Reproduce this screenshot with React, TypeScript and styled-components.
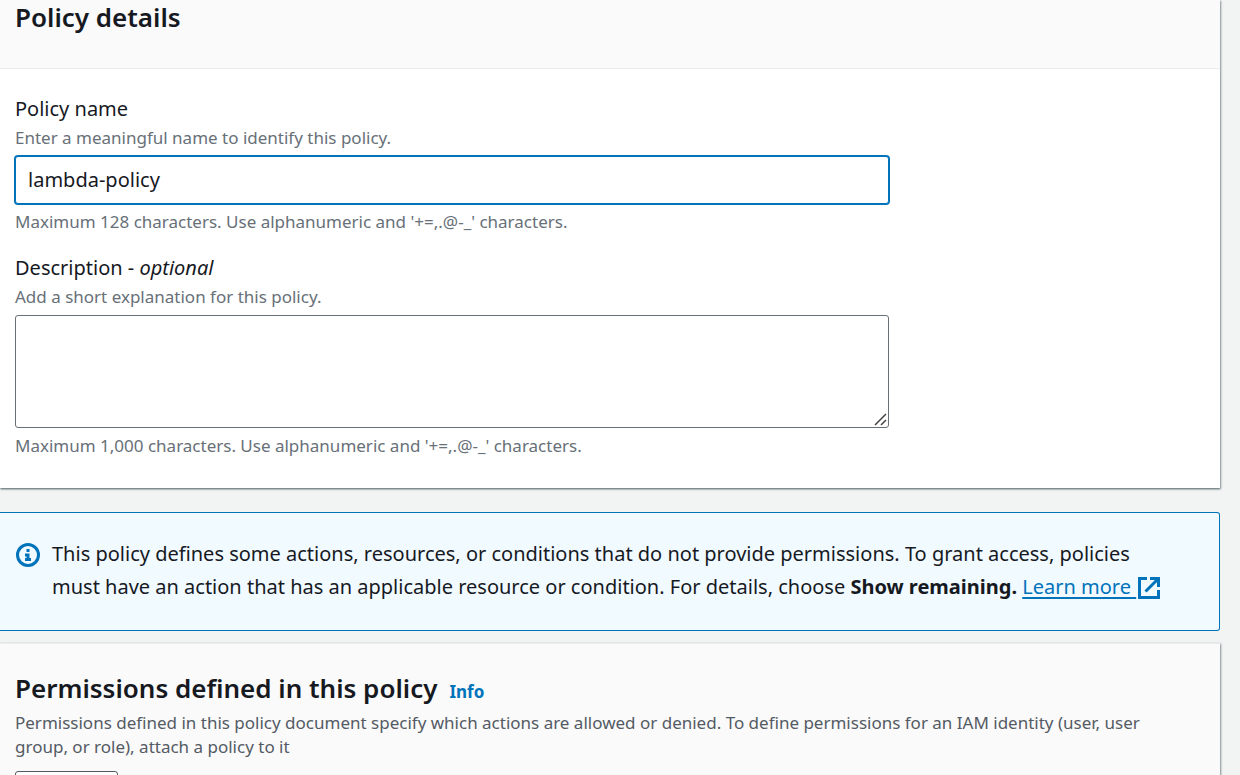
import React from "react";
import styled, { createGlobalStyle } from "styled-components";

const GlobalStyle = createGlobalStyle`
  *, *::before, *::after { box-sizing: border-box; }
  body {
    margin: 0;
    background: #f2f3f3;
    color: #16191f;
    font-family: "Noto Sans", "Open Sans", sans-serif;
    font-size: 20px;
    line-height: 33px;
  }
`;

const Page = styled.main`
  display: flex;
  flex-direction: column;
  height: 100vh;
  padding-right: 20px;
  overflow: hidden;
`;

const Panel = styled.section`
  flex: none;
  background: #ffffff;
  border-top: 1px solid #eaeded;
  box-shadow: 0 1px 2px 0 rgba(0, 28, 36, 0.5), 1px 1px 2px 0 rgba(0, 28, 36, 0.3);
`;

const TopPanel = styled(Panel)`
  border-top: 0;
`;

const PanelHeader = styled.header<{ $first?: boolean }>`
  padding: ${(p) => (p.$first ? "0 20px 34px 15px" : "27px 48px 32px 15px")};
  background: #fafafa;
  border-bottom: 1px solid #eaeded;
`;

const Title = styled.h2`
  margin: 0;
  font-size: 26px;
  line-height: 34px;
  font-weight: 600;
`;

const TitleRow = styled.div`
  display: flex;
  align-items: baseline;
  gap: 12px;
`;

const InfoLink = styled.a`
  color: #0073bb;
  font-size: 17px;
  line-height: 24px;
  font-weight: 700;
  text-decoration: none;
`;

const Summary = styled.p`
  margin: 6px 0 12px;
  color: #545b64;
  font-size: 17px;
  line-height: 24px;
`;

const Form = styled.form`
  display: flex;
  flex-direction: column;
  gap: 18px;
  padding: 24px 15px 30px;
`;

const Field = styled.div`
  display: flex;
  flex-direction: column;
  width: 74%;
  max-width: 874px;
`;

const Label = styled.label`
  padding-bottom: 2px;
  line-height: 31px;
`;

const Hint = styled.p`
  margin: 0;
  color: #687078;
  font-size: 17px;
  line-height: 24px;
`;

const Constraint = styled(Hint)`
  margin-top: 6px;
`;

const TextInput = styled.input`
  width: 100%;
  height: 48px;
  margin-top: 6px;
  padding: 0 12px 2px;
  border: 1px solid #0073bb;
  border-radius: 3px;
  outline: 0;
  box-shadow: 0 0 0 1px #0073bb;
  background: #ffffff;
  color: inherit;
  font: inherit;
`;

const AreaBox = styled.div`
  position: relative;
  display: flex;
  margin-top: 6px;
`;

const TextArea = styled.textarea`
  width: 100%;
  height: 113px;
  padding: 6px 12px;
  border: 1px solid #687078;
  border-radius: 3px;
  outline: 0;
  resize: none;
  background: #ffffff;
  color: inherit;
  font: inherit;
`;

const Grip = styled.svg`
  position: absolute;
  right: 2px;
  bottom: 2px;
  pointer-events: none;
`;

const Notice = styled.aside`
  display: flex;
  flex: none;
  gap: 12px;
  margin: 24px 0 12px;
  padding: 24px 48px 27px 16px;
  border: 1px solid #0073bb;
  border-left: 0;
  border-radius: 0 3px 3px 0;
  background: #f1faff;
`;

const NoticeIcon = styled.svg`
  flex: none;
  margin-top: 6px;
`;

const NoticeText = styled.p`
  margin: 0;
`;

const Link = styled.a`
  color: #0073bb;
  text-decoration: underline;
  text-underline-offset: 3px;
  white-space: nowrap;

  svg {
    margin-left: 2px;
    vertical-align: -5px;
  }
`;

const Button = styled.button`
  width: 103px;
  height: 45px;
  border: 1px solid #545b64;
  border-radius: 3px;
  background: #ffffff;
  color: #545b64;
  font: inherit;
  font-weight: 700;
`;

export default function App() {
  return (
    <>
      <GlobalStyle />
      <Page>
        <TopPanel>
          <PanelHeader $first>
            <Title>Policy details</Title>
          </PanelHeader>
          <Form>
            <Field>
              <Label htmlFor="policy-name">Policy name</Label>
              <Hint>Enter a meaningful name to identify this policy.</Hint>
              <TextInput id="policy-name" type="text" defaultValue="lambda-policy" />
              <Constraint>
                Maximum 128 characters. Use alphanumeric and '+=,.@-_' characters.
              </Constraint>
            </Field>
            <Field>
              <Label htmlFor="policy-description">
                Description - <em>optional</em>
              </Label>
              <Hint>Add a short explanation for this policy.</Hint>
              <AreaBox>
                <TextArea id="policy-description" />
                <Grip width="13" height="13" viewBox="0 0 13 13" aria-hidden="true">
                  <path d="M1 12 12 1M7 12l5-5" stroke="#444" strokeWidth="1.5" fill="none" />
                </Grip>
              </AreaBox>
              <Constraint>
                Maximum 1,000 characters. Use alphanumeric and '+=,.@-_' characters.
              </Constraint>
            </Field>
          </Form>
        </TopPanel>

        <Notice>
          <NoticeIcon width="24" height="24" viewBox="0 0 24 24" aria-hidden="true">
            <circle cx="12" cy="12" r="10.5" fill="none" stroke="#0073bb" strokeWidth="3" />
            <path d="M10.5 6h3v3h-3zM9 10.5h4.5V15H15v3H9v-3h1.5v-1.5H9z" fill="#0073bb" />
          </NoticeIcon>
          <NoticeText>
            This policy defines some actions, resources, or conditions that do not provide
            permissions. To grant access, policies must have an action that has an applicable
            resource or condition. For details, choose <strong>Show remaining.</strong>{" "}
            <Link href="#learn-more">
              Learn more{" "}
              <svg width="22" height="22" viewBox="0 0 22 22" aria-hidden="true">
                <path
                  d="M9 1.5H1.5v19h19V13M12 1.5h8.5V10M20 2 7.5 14.5"
                  fill="none"
                  stroke="#0073bb"
                  strokeWidth="3"
                />
              </svg>
            </Link>
          </NoticeText>
        </Notice>

        <Panel>
          <PanelHeader>
            <TitleRow>
              <Title>Permissions defined in this policy</Title>
              <InfoLink href="#info">Info</InfoLink>
            </TitleRow>
            <Summary>
              Permissions defined in this policy document specify which actions are allowed or
              denied. To define permissions for an IAM identity (user, user group, or role), attach
              a policy to it
            </Summary>
            <Button type="button" aria-label="Edit" />
          </PanelHeader>
        </Panel>
      </Page>
    </>
  );
}
